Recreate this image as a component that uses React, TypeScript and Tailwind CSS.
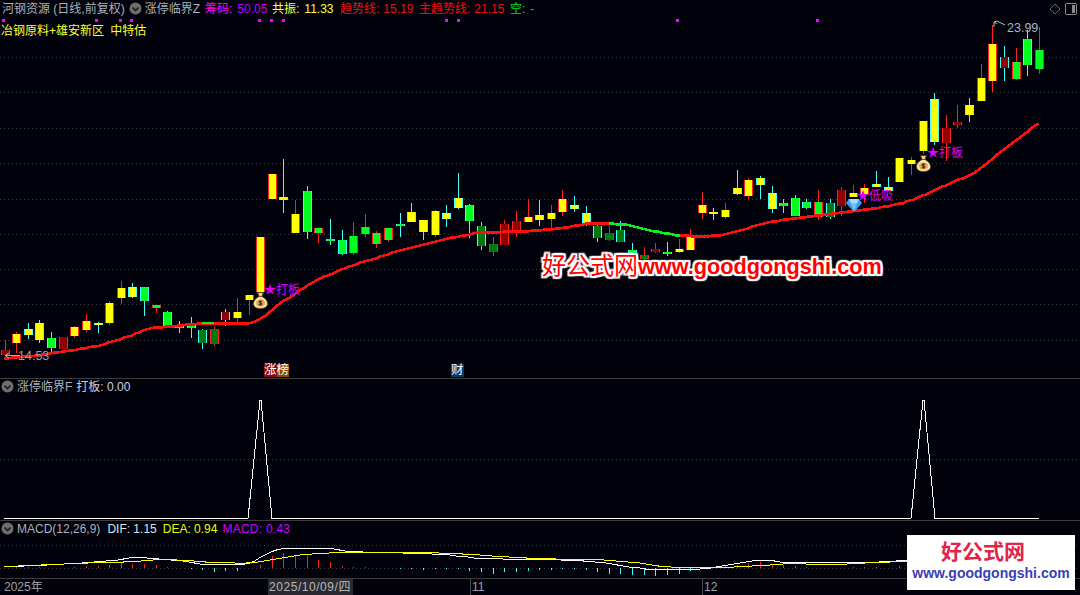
import React from 'react';

const FONT = "font-['Liberation_Sans','Noto_Sans_CJK_SC',sans-serif]";

// colour sets: [fill, border/wick]
const KIND: Record<string, [string, string]> = {
  yr: ['#ffff00', '#ff2020'],
  yc: ['#ffff00', '#40ffff'],
  gc: ['#00ff20', '#40ffff'],
  gr: ['#00ff20', '#ff2020'],
  dr: ['#8f0000', '#ff2020'],
  dc: ['#8f0000', '#40ffff'],
  tc: ['#007a10', '#40ffff'],
  tr: ['#007a10', '#ff2020'],
};

// kind, wick top, body top, body bottom, wick bottom
type Candle = [string, number, number, number, number];
const candles: Candle[] = [
  ['dr', 340, 350, 355, 356], ['yr', 332, 334, 343, 353], ['yc', 323, 329, 335, 339], ['yc', 320, 323, 340, 343],
  ['gc', 332, 338, 348, 352], ['dr', 337, 337, 349, 349], ['yr', 326, 327, 336, 338], ['yr', 314, 321, 330, 332],
  ['yc', 322, 323, 324, 333], ['yr', 301, 303, 323, 325], ['yr', 281, 288, 298, 304], ['yc', 283, 287, 297, 298],
  ['gc', 287, 287, 301, 316], ['gr', 305, 305, 308, 313], ['gc', 311, 312, 326, 328], ['gc', 321, 325, 328, 333],
  ['gc', 317, 324, 328, 338], ['tc', 329, 330, 343, 349], ['tr', 327, 329, 344, 346], ['dc', 309, 312, 320, 326],
  ['yr', 298, 312, 318, 322], ['yr', 295, 295, 300, 315], ['yr', 237, 237, 292, 294], ['yr', 174, 174, 199, 199],
  ['yc', 159, 197, 200, 213], ['yr', 200, 214, 233, 233], ['gc', 186, 191, 232, 239], ['gr', 227, 228, 233, 243],
  ['gc', 219, 239, 240, 245], ['gc', 230, 240, 254, 255], ['gr', 222, 236, 253, 255], ['gr', 214, 227, 234, 237],
  ['gr', 231, 233, 244, 248], ['gr', 228, 228, 240, 242], ['gc', 213, 224, 225, 237], ['yc', 203, 212, 222, 222],
  ['yc', 220, 220, 232, 240], ['yr', 210, 211, 235, 237], ['yc', 205, 213, 219, 227], ['yc', 173, 198, 208, 209],
  ['gc', 204, 205, 221, 238], ['tc', 222, 226, 246, 250], ['tr', 237, 244, 252, 256], ['dr', 220, 224, 245, 245],
  ['dr', 211, 221, 231, 237], ['yr', 199, 217, 222, 222], ['yc', 200, 215, 220, 226], ['yr', 205, 213, 219, 228],
  ['yr', 190, 199, 212, 216], ['yc', 196, 205, 209, 212], ['yc', 206, 213, 225, 226], ['tc', 224, 226, 238, 242],
  ['tr', 226, 233, 240, 241], ['tc', 221, 230, 242, 242], ['gc', 243, 250, 258, 260], ['tr', 247, 255, 259, 262],
  ['dr', 243, 249, 252, 253], ['gc', 242, 252, 253, 256], ['yr', 239, 249, 252, 253], ['yr', 229, 236, 250, 250],
  ['yr', 192, 205, 213, 219], ['yc', 208, 212, 213, 220], ['yr', 203, 210, 217, 219], ['yc', 170, 188, 194, 195],
  ['yr', 178, 180, 196, 199], ['yc', 176, 178, 185, 199], ['yc', 186, 193, 209, 213], ['gc', 199, 203, 206, 213],
  ['gc', 195, 198, 216, 216], ['gc', 199, 202, 208, 209], ['gr', 190, 202, 217, 220], ['tc', 199, 203, 217, 219],
  ['dr', 187, 190, 206, 216], ['yr', 185, 193, 197, 197], ['yr', 184, 188, 194, 203], ['yc', 171, 184, 187, 187],
  ['yc', 177, 187, 191, 191], ['yr', 158, 158, 182, 182], ['yr', 157, 160, 164, 175], ['yr', 121, 121, 151, 154],
  ['yc', 93, 99, 142, 145], ['dr', 115, 128, 143, 161], ['dr', 105, 122, 125, 128], ['yc', 98, 105, 115, 122],
  ['yr', 64, 78, 101, 101], ['yr', 25, 44, 81, 92], ['dc', 46, 57, 68, 81], ['gr', 48, 62, 79, 80],
  ['gc', 30, 39, 65, 76], ['gr', 27, 50, 69, 74],
];

const cx = (i: number) => Math.round(4.6 + 11.62 * i);

type Pt = [number, number];

// trend anchors read off the picture, then curved and snapped to pixels
const trendAnchors: Pt[] = [
  [4, 358], [50, 353], [100, 345], [128, 336], [150, 328], [170, 326], [202, 323], [248, 323], [262, 317], [280, 303],
  [305, 287], [320, 278], [345, 268], [360, 262], [400, 250], [440, 240], [470, 234], [480, 232], [520, 231], [560, 228],
  [590, 223], [609, 223], [630, 225], [650, 230], [680, 235], [720, 235], [740, 230], [760, 224], [780, 220], [800, 217],
  [840, 212], [880, 207], [910, 200], [950, 183], [975, 172], [1000, 152], [1020, 137], [1039, 123],
];

function curve(pts: Pt[], step = 4): Pt[] {
  const out: Pt[] = [];
  for (let i = 0; i < pts.length - 1; i++) {
    const p0 = pts[Math.max(i - 1, 0)];
    const p1 = pts[i];
    const p2 = pts[i + 1];
    const p3 = pts[Math.min(i + 2, pts.length - 1)];
    const n = Math.max(1, Math.round((p2[0] - p1[0]) / step));
    for (let k = 0; k < n; k++) {
      const t = k / n;
      const x = p1[0] + (p2[0] - p1[0]) * t;
      const y =
        0.5 *
        (2 * p1[1] +
          (p2[1] - p0[1]) * t +
          (2 * p0[1] - 5 * p1[1] + 4 * p2[1] - p3[1]) * t * t +
          (3 * p1[1] - p0[1] - 3 * p2[1] + p3[1]) * t * t * t);
      out.push([Math.round(x), Math.round(y)]);
    }
  }
  out.push(pts[pts.length - 1]);
  return out;
}

const trend = curve(trendAnchors);
const toPoints = (pts: Pt[]) => pts.map((p) => `${p[0]},${p[1] + 0.5}`).join(' ');
const trendA = toPoints(trend.filter((p) => p[0] <= 609));
const trendB = toPoints(trend.filter((p) => p[0] >= 609 && p[0] <= 680));
const trendC = toPoints(trend.filter((p) => p[0] >= 680));

const macdHist = [
  0, 1, 1, 1, 0, 0, 1, 2, 2, 3, 5, 4, 4, 3, 1, 0, -1, -2, -4, -3, -3, 0, 3, 12, 15, 13, 12, 8, 6, 2, 1, 1, 0, 0, -1, -1,
  -2, -1, -1, -1, -3, -4, -6, -4, -4, -3, -2, -2, -1, -1, -2, -4, -6, -6, -7, -7, -8, -7, -6, -3, 0, 0, 2, 3, 5, 6, 4, 3,
  2, 1, 0, 0, 0, 1, 1, 1, 0, 2,
];
const difLine = toPoints(curve([
  [4, 566], [55, 564], [103, 561], [138, 557], [162, 559], [186, 561], [203, 564], [248, 563], [272, 551], [290, 548],
  [331, 548], [348, 551], [383, 552], [441, 554], [483, 558], [541, 559], [592, 561], [643, 568], [664, 569], [692, 569],
  [719, 566], [761, 560], [788, 562], [871, 562], [905, 560], [1039, 558],
], 6));
const deaLine = toPoints(curve([
  [4, 566], [55, 564], [103, 562], [138, 561], [162, 559], [220, 562], [255, 562], [297, 555], [338, 552], [407, 552],
  [448, 553], [541, 558], [595, 559], [643, 563], [674, 567], [719, 567], [761, 565], [792, 563], [826, 564], [905, 561],
  [1039, 560],
], 6));

const marks = [3, 96, 120, 131, 259, 271, 283, 446, 458, 677, 817];

const ChevronDot = () => (
  <svg width="13" height="13" viewBox="0 0 13 13" className="shrink-0">
    <circle cx="6.5" cy="6.5" r="6" fill="#6e6e6e" />
    <path d="M3.5 5.5 L6.5 8.5 L9.5 5.5" fill="none" stroke="#1c1c1c" strokeWidth="1.6" />
  </svg>
);

const MoneyBag = ({ className }: { className: string }) => (
  <svg width="15" height="17" viewBox="0 0 15 17" className={className}>
    <path d="M4.5 0.5 H10.5 L9 4.5 H6 Z" fill="#f2cf7a" stroke="#4a2f0c" strokeWidth="0.8" />
    <path d="M6 4.5 H9 C12.5 6.5 14.5 9 14.5 11.5 C14.5 15 11.5 16.5 7.5 16.5 C3.5 16.5 0.5 15 0.5 11.5 C0.5 9 2.5 6.5 6 4.5 Z" fill="#f8e6ae" stroke="#6b4413" strokeWidth="0.8" />
    <ellipse cx="7.5" cy="11" rx="4.5" ry="3.6" fill="#e3ad52" />
    <path d="M9.5 9.2 H6.2 V11 H8.8 V12.8 H5.5 M7.5 8.3 V13.7" fill="none" stroke="#3f2606" strokeWidth="0.9" />
  </svg>
);

const Gem = () => (
  <svg width="16" height="14" viewBox="0 0 16 14" className="absolute left-[846px] top-[198px]">
    <path d="M3 1 H13 L16 5 L8 14 L0 5 Z" fill="#3f9ff0" />
    <path d="M3 1 H13 L11 5 H5 Z" fill="#a8dcff" />
    <path d="M5 5 H11 L8 13 Z" fill="#78c4fb" />
  </svg>
);

const MainChart = () => (
  <svg width="1080" height="378" className="absolute left-0 top-0" shapeRendering="crispEdges">
    {[57, 92, 128, 163, 199, 234, 269, 304, 340].map((y) => (
      <line key={y} x1="0" x2="1080" y1={y + 0.5} y2={y + 0.5} stroke="#3a3a3a" strokeDasharray="1 3" />
    ))}
    {marks.map((x) => (
      <rect key={x} x={x - 1} y="19" width="3" height="3" fill="#ff00ff" />
    ))}
    {candles.map(([kind, hi, top, bottom, lo], i) => {
      const [fill, edge] = KIND[kind];
      const x = cx(i);
      return (
        <g key={i}>
          <line x1={x + 0.5} x2={x + 0.5} y1={hi} y2={lo} stroke={edge} />
          <rect x={x - 4} y={top} width="9" height={Math.max(bottom - top, 2)} fill={fill} />
          <line x1={x - 4 + 0.5} x2={x - 4 + 0.5} y1={top} y2={Math.max(bottom, top + 2)} stroke={edge} />
          <line x1={x + 4 + 0.5} x2={x + 4 + 0.5} y1={top} y2={Math.max(bottom, top + 2)} stroke={edge} />
        </g>
      );
    })}
    <polyline points={trendA} fill="none" stroke="#ff1010" strokeWidth="2.6" />
    <polyline points={trendB} fill="none" stroke="#10ee20" strokeWidth="2.6" />
    <polyline points={trendC} fill="none" stroke="#ff1010" strokeWidth="2.6" />
    <line x1="202" x2="214" y1="323" y2="323" stroke="#10ee20" strokeWidth="2" />
    <path d="M5 355.5 H20 M5 355.5 L9 353 M5 355.5 L9 358" fill="none" stroke="#b0b0b0" shapeRendering="auto" />
    <path d="M994 27 L994 22 L997 21 L1005 25 M994 22 L997 24" fill="none" stroke="#c0c0c0" shapeRendering="auto" />
  </svg>
);

export default function App() {
  return (
    <div className={`${FONT} relative flex h-[595px] w-[1080px] flex-col overflow-hidden bg-[#02020c] text-[12px] leading-[14px]`}>
      {/* main candle panel */}
      <div className="relative h-[379px] shrink-0 border-b border-[#3c3c3c]">
        <MainChart />

        <div className="relative flex h-[16px] items-center whitespace-nowrap pl-[2px] pt-[1px]">
          <span className="text-[#a9b1b9]">河钢资源 (日线,前复权)</span>
          <span className="ml-[4px]"><ChevronDot /></span>
          <span className="ml-[3px] text-[#a9b1b9]">涨停临界Z</span>
          <span className="ml-[5px] flex w-[67px] gap-[5px] text-[#ff00ff]"><span>筹码:</span><span className="text-[#c400ff]">50.05</span></span>
          <span className="flex w-[68px] gap-[5px] text-[#ffff40]"><span>共振:</span><span>11.33</span></span>
          <span className="flex w-[79px] gap-[4px] text-[#f01010]"><span>趋势线:</span><span>15.19</span></span>
          <span className="flex w-[91px] gap-[4px] text-[#f01010]"><span>主趋势线:</span><span>21.15</span></span>
          <span className="flex gap-[5px] text-[#00e020]"><span>空:</span><span>-</span></span>
        </div>
        <div className="relative mt-[8px] whitespace-nowrap pl-[1px] text-[#ffff30] [word-spacing:3px]">冶钢原料+雄安新区 中特估</div>

        {/* markers over the candles */}
        <div className="absolute right-[3px] top-[3px] flex items-center gap-[4px]">
          <svg width="12" height="12" viewBox="0 0 12 12">
            <path d="M6 1 L11 6 L6 11 L1 6 Z" fill="none" stroke="#666" />
          </svg>
          <svg width="12" height="12" viewBox="0 0 12 12" shapeRendering="crispEdges">
            <rect x="0.5" y="0.5" width="11" height="11" rx="2" fill="#02020c" stroke="#8a8a8a" />
            <rect x="7" y="2" width="3" height="8" fill="#8a8a8a" />
          </svg>
        </div>
        <span className="absolute left-[1007px] top-[21px] text-[12.5px] text-[#a6b6c6]">23.99</span>
        <span className="absolute left-[18px] top-[349px] text-[12.5px] text-[#a0a0a0]">14.53</span>

        <MoneyBag className="absolute left-[253px] top-[292px]" />
        <span className="absolute left-[264px] top-[283px] text-[#e000ff]">★打板</span>
        <MoneyBag className="absolute left-[916px] top-[155px]" />
        <span className="absolute left-[927px] top-[146px] text-[#e000ff]">★打板</span>
        <Gem />
        <span className="absolute left-[857px] top-[189px] text-[#e000ff]">★低吸</span>

        <div className="absolute left-[264px] top-[364px] flex text-[12.5px] leading-[13px] text-white">
          <span className="bg-[#850a0a]">涨</span>
          <span className="bg-[#8a4a00]">榜</span>
        </div>
        <span className="absolute left-[451px] top-[364px] bg-[#0b3a66] text-[12.5px] leading-[13px] text-white">财</span>

        <div className="absolute left-[542px] top-[252px] flex items-baseline whitespace-nowrap text-[#ff0000] [text-shadow:0_0_1px_#fff,0_0_3px_#fff,1px_1px_1px_#fff,-1px_-1px_1px_#fff,1px_-1px_1px_#fff,-1px_1px_1px_#fff,2px_0_1px_#fff,-2px_0_1px_#fff,0_2px_1px_#fff,0_-2px_1px_#fff,2px_2px_1px_#fff,-2px_-2px_1px_#fff,2px_-2px_1px_#fff,-2px_2px_1px_#fff]">
          <span className="text-[24px] leading-[28px] font-normal">好公式网</span>
          <span className="text-[21.7px] leading-[28px] font-bold">www.goodgongshi.com</span>
        </div>
      </div>

      {/* 涨停临界F panel */}
      <div className="relative h-[142px] shrink-0 border-b border-[#3c3c3c]">
        <svg width="1080" height="141" className="absolute left-0 top-0" shapeRendering="crispEdges">
          <line x1="0" x2="1080" y1="80.5" y2="80.5" stroke="#3a3a3a" strokeDasharray="1 3" />
          <polyline
            points="4,139.5 248,139.5 260,21 261,21 272,139.5 911,139.5 923,21 924,21 935,139.5 1039,139.5"
            fill="none"
            stroke="#ffffff"
            strokeWidth="1"
          />
        </svg>
        <div className="relative flex h-[15px] items-center whitespace-nowrap pl-[1px]">
          <ChevronDot />
          <span className="ml-[3px] text-[#a9b1b9]">涨停临界F</span>
          <span className="ml-[4px] text-[#c8d2dc]">打板: 0.00</span>
        </div>
      </div>

      {/* MACD panel */}
      <div className="relative h-[58px] shrink-0 border-b border-[#3c3c3c]">
        <svg width="1080" height="57" viewBox="0 521 1080 57" className="absolute left-0 top-0" shapeRendering="crispEdges">
          <line x1="0" x2="1080" y1="545.5" y2="545.5" stroke="#3a3a3a" strokeDasharray="1 3" />
          <line x1="0" x2="1080" y1="568.5" y2="568.5" stroke="#3a3a3a" strokeDasharray="1 3" />
          {macdHist.map((v, i) =>
            v === 0 ? null : (
              <line key={i} x1={cx(i) + 0.5} x2={cx(i) + 0.5} y1="568" y2={568 - v} stroke={v > 0 ? '#ff2020' : '#40ffff'} />
            ),
          )}
          <polyline points={difLine} fill="none" stroke="#ffffff" />
          <polyline points={deaLine} fill="none" stroke="#ffff00" />
        </svg>
        <div className="relative flex h-[15px] items-center whitespace-nowrap pl-[1px]">
          <ChevronDot />
          <span className="ml-[3px] text-[#a9b1b9]">MACD(12,26,9)</span>
          <span className="ml-[7px] text-[#d6e6f0]">DIF: 1.15</span>
          <span className="ml-[6px] text-[#e6ff00]">DEA: 0.94</span>
          <span className="ml-[5px] tracking-[0.25px] text-[#d000ff]">MACD: 0.43</span>
        </div>
      </div>

      {/* time axis */}
      <div className="relative flex h-[16px] items-stretch whitespace-nowrap text-[#a0a0a0]">
        <span className="w-[268px] shrink-0 pl-[4px] leading-[16px]">2025年</span>
        <span className="w-[85px] shrink-0 bg-[#2a2a30] pl-[1px] leading-[16px] tracking-[0.55px] text-[#b8b8b8]">2025/10/09/四</span>
        <span className="ml-[117px] w-[232px] shrink-0 border-l border-[#4a4a4a] pl-[1px] leading-[16px]">11</span>
        <span className="w-[200px] shrink-0 border-l border-[#4a4a4a] pl-[1px] leading-[16px]">12</span>
      </div>

      {/* site stamp */}
      <div className="absolute left-[907px] top-[535px] flex h-[55px] w-[168px] flex-col items-center bg-white pt-[4px]">
        <span className="pr-[16px] text-[21px] leading-[26px] font-bold text-[#e0244a]">好公式网</span>
        <span className="text-[14px] leading-[17px] font-bold text-[#3a40b8]">www.goodgongshi.com</span>
      </div>
    </div>
  );
}
